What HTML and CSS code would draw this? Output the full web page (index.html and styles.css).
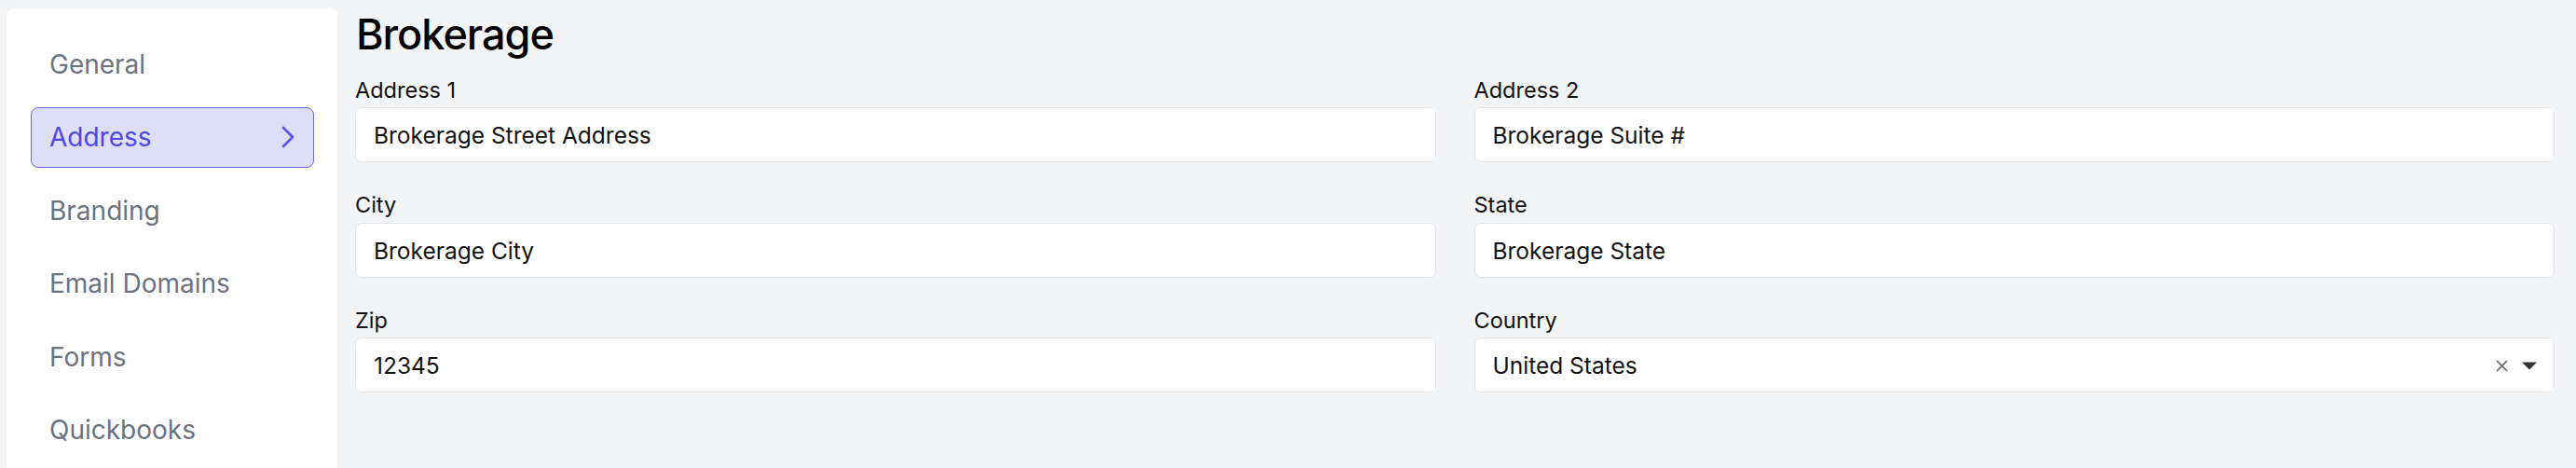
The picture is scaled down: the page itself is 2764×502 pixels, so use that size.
FILE: index.html
```html
<!DOCTYPE html>
<html lang="en">
<head>
<meta charset="utf-8">
<title>Brokerage Address</title>
<link rel="stylesheet" href="styles.css">
</head>
<body>
<div class="layout">
  <nav class="sidebar">
    <a class="nav-item">General</a>
    <a class="nav-item active">Address
      <svg class="chev" width="14" height="24" viewBox="0 0 14 24"><polyline points="2,2 12,12 2,22" fill="none" stroke="currentColor" stroke-width="2.8" stroke-linecap="round" stroke-linejoin="round"/></svg>
    </a>
    <a class="nav-item">Branding</a>
    <a class="nav-item">Email Domains</a>
    <a class="nav-item">Forms</a>
    <a class="nav-item">Quickbooks</a>
  </nav>
  <main class="content">
    <h1 class="title">Brokerage</h1>
    <div class="form-grid">
      <div class="field">
        <label class="label">Address 1</label>
        <input class="input" type="text" value="Brokerage Street Address" readonly>
      </div>
      <div class="field">
        <label class="label">Address 2</label>
        <input class="input" type="text" value="Brokerage Suite #" readonly>
      </div>
      <div class="field">
        <label class="label">City</label>
        <input class="input" type="text" value="Brokerage City" readonly>
      </div>
      <div class="field">
        <label class="label">State</label>
        <input class="input" type="text" value="Brokerage State" readonly>
      </div>
      <div class="field">
        <label class="label">Zip</label>
        <input class="input" type="text" value="12345" readonly>
      </div>
      <div class="field">
        <label class="label">Country</label>
        <div class="input select">
          <span class="select-value">United States</span>
          <span class="select-icons">
            <svg class="clear" width="13" height="13" viewBox="0 0 13 13"><path d="M1.5 1.5L11.5 11.5M11.5 1.5L1.5 11.5" stroke="#7a7a7a" stroke-width="1.8" stroke-linecap="round"/></svg>
            <svg class="caret" width="16" height="9" viewBox="0 0 16 9"><path d="M0 0.5H16L8 8.5Z" fill="#333"/></svg>
          </span>
        </div>
      </div>
    </div>
  </main>
</div>
</body>
</html>
```

FILE: styles.css
```css
* { box-sizing: border-box; }

html, body {
  margin: 0;
  height: 100%;
}

body {
  background: #f3f4f6;
  font-family: Inter, "Liberation Sans", Arial, sans-serif;
  color: #111111;
  overflow: hidden;
}

.layout {
  display: flex;
  align-items: flex-start;
  min-height: 100%;
}

.sidebar {
  flex: 0 0 355px;
  margin: 9px 0 0 7px;
  min-height: 600px;
  background: #ffffff;
  border-radius: 8px 8px 0 0;
  padding: 27.2px 25px 0 26px;
  display: flex;
  flex-direction: column;
  gap: 13.5px;
}

.nav-item {
  display: flex;
  align-items: center;
  justify-content: space-between;
  height: 65px;
  padding: 0 20px 0 19px;
  border: 1px solid transparent;
  border-radius: 8px;
  font-size: 28px;
  color: #6b7280;
  text-decoration: none;
}

.nav-item.active {
  background: #dfdef8;
  border-color: #6366f1;
  color: #4f46e5;
}

.chev {
  display: block;
  color: #5b55e6;
}

.content {
  flex: 1;
  padding: 10px 23px 0 19px;
}

.title {
  margin: 0 0 16.5px 0;
  font-size: 45px;
  line-height: 54px;
  font-weight: 500;
  letter-spacing: -1px;
  color: #000000;
  padding-left: 1px;
}

.form-grid {
  display: grid;
  grid-template-columns: 1fr 1fr;
  column-gap: 41px;
  row-gap: 30px;
}

.field {
  display: flex;
  flex-direction: column;
}

.label {
  display: block;
  font-size: 23.5px;
  line-height: 32px;
  margin-bottom: 2.5px;
  color: #111111;
}

.input {
  display: block;
  width: 100%;
  height: 59px;
  margin: 0;
  padding: 1px 19px 0 19px;
  border: 1px solid #e2e4e8;
  border-radius: 7px;
  background: #ffffff;
  font-family: inherit;
  font-size: 24.5px;
  color: #111111;
  outline: none;
}

.select {
  display: flex;
  align-items: center;
  justify-content: space-between;
  padding-right: 18px;
}

.select-icons {
  display: flex;
  align-items: center;
  gap: 15px;
}

.clear, .caret {
  display: block;
}
```
